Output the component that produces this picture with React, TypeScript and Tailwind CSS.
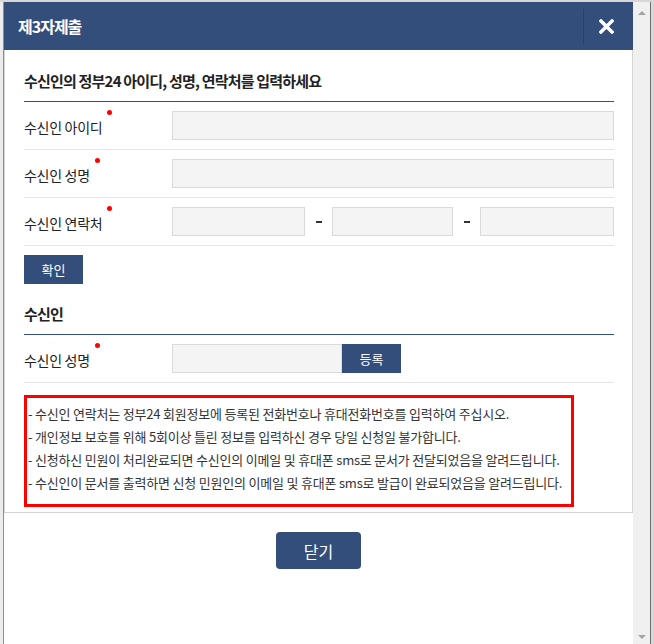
import React from "react";

function Label({ text }: { text: string }) {
  return (
    <div className="w-[148px] shrink-0">
      <span className="relative text-[14px] tracking-[-0.3px] text-[#222]">
        {text}
        <span className="absolute -right-[10px] -top-[7px] w-[5px] h-[5px] rounded-full bg-[#ff0000]" />
      </span>
    </div>
  );
}

function Field({ w }: { w: string }) {
  return <div className={`h-[29px] border border-[#dadada] bg-[#f4f4f4] ${w}`} />;
}

function Dash() {
  return (
    <div className="w-[27px] flex justify-center">
      <div className="w-[6px] h-[2px] bg-[#333]" />
    </div>
  );
}

export default function App() {
  return (
    <div className="w-[654px] h-[644px] flex flex-col bg-white overflow-hidden font-['Noto_Sans_CJK_KR','Noto_Sans',sans-serif]">
      <div className="h-[2px] bg-[#d6d6d6] shrink-0" />
      <div className="flex flex-1 min-h-0">
        {/* left strip */}
        <div className="w-[4px] bg-[#ececec] border-r border-[#8e8e8e] shrink-0" />
        {/* main window */}
        <div className="w-[629px] shrink-0 flex flex-col">
          <div className="h-[48px] bg-[#344e7b] flex items-center shrink-0">
            <div className="pl-[14px] text-white text-[16px] font-bold tracking-[-1px]">제3자제출</div>
            <div className="ml-auto flex items-center pr-[19px]">
              <div className="w-px h-[35px] bg-[#2a4069]" />
              <svg className="ml-[15px]" width="15" height="15" viewBox="0 0 15 15">
                <path d="M2 2 L13 13 M13 2 L2 13" stroke="white" strokeWidth="3.4" strokeLinecap="square" fill="none" />
              </svg>
            </div>
          </div>
          <div className="border-l border-r border-b border-[#d4d4d4] pl-[19px] pr-[18px] pb-[5px]">
            <div className="pt-[20px] pb-[9px] border-b border-[#344e7b] text-[15px] leading-[22px] font-bold tracking-[-0.8px] text-[#222]">
              수신인의 정부24 아이디, 성명, 연락처를 입력하세요
            </div>
            <div className="flex items-center h-[48px] border-b border-[#e6e6e6]">
              <Label text="수신인 아이디" />
              <Field w="flex-1" />
            </div>
            <div className="flex items-center h-[48px] border-b border-[#e6e6e6]">
              <Label text="수신인 성명" />
              <Field w="flex-1" />
            </div>
            <div className="flex items-center h-[48px] border-b border-[#e6e6e6]">
              <Label text="수신인 연락처" />
              <Field w="w-[133px]" />
              <Dash />
              <Field w="w-[121px]" />
              <Dash />
              <Field w="flex-1" />
            </div>
            <button className="mt-[9px] w-[59px] h-[29px] bg-[#344e7b] text-white text-[13px] flex items-center justify-center">
              확인
            </button>
            <div className="mt-[19px] pb-[9px] border-b border-[#344e7b] text-[15px] leading-[22px] font-bold tracking-[-0.8px] text-[#222]">
              수신인
            </div>
            <div className="flex items-center h-[48px] border-b border-[#e6e6e6]">
              <Label text="수신인 성명" />
              <Field w="w-[170px]" />
              <button className="w-[59px] h-[29px] bg-[#344e7b] text-white text-[13px] flex items-center justify-center">
                등록
              </button>
            </div>
            <div className="mt-[12px] w-[550px] h-[112px] border-[3px] border-[#ff0000] pl-[1px] pt-[4px] pb-[10px] text-[13px] leading-[23px] tracking-[-0.2px] text-[#333]">
              <div>- 수신인 연락처는 정부24 회원정보에 등록된 전화번호나 휴대전화번호를 입력하여 주십시오.</div>
              <div>- 개인정보 보호를 위해 5회이상 틀린 정보를 입력하신 경우 당일 신청일 불가합니다.</div>
              <div>- 신청하신 민원이 처리완료되면 수신인의 이메일 및 휴대폰 sms로 문서가 전달되었음을 알려드립니다.</div>
              <div>- 수신인이 문서를 출력하면 신청 민원인의 이메일 및 휴대폰 sms로 발급이 완료되었음을 알려드립니다.</div>
            </div>
          </div>
          <div className="flex justify-center pt-[19px]">
            <button className="w-[85px] h-[37px] rounded-[4px] bg-[#344e7b] text-white text-[16px] flex items-center justify-center">
              닫기
            </button>
          </div>
        </div>
        {/* scrollbar */}
        <div className="w-[17px] shrink-0 bg-[#f0f0f0] flex flex-col items-center justify-between pt-[9px] pb-[5px]">
          <div className="w-0 h-0 border-x-[4px] border-x-transparent border-b-[4px] border-b-[#a3a3a3]" />
          <div className="w-0 h-0 border-x-[4px] border-x-transparent border-t-[4px] border-t-[#a3a3a3]" />
        </div>
        <div className="w-[4px] shrink-0 bg-[#d8d8d8] border-l border-[#6e6e6e]" />
      </div>
    </div>
  );
}
